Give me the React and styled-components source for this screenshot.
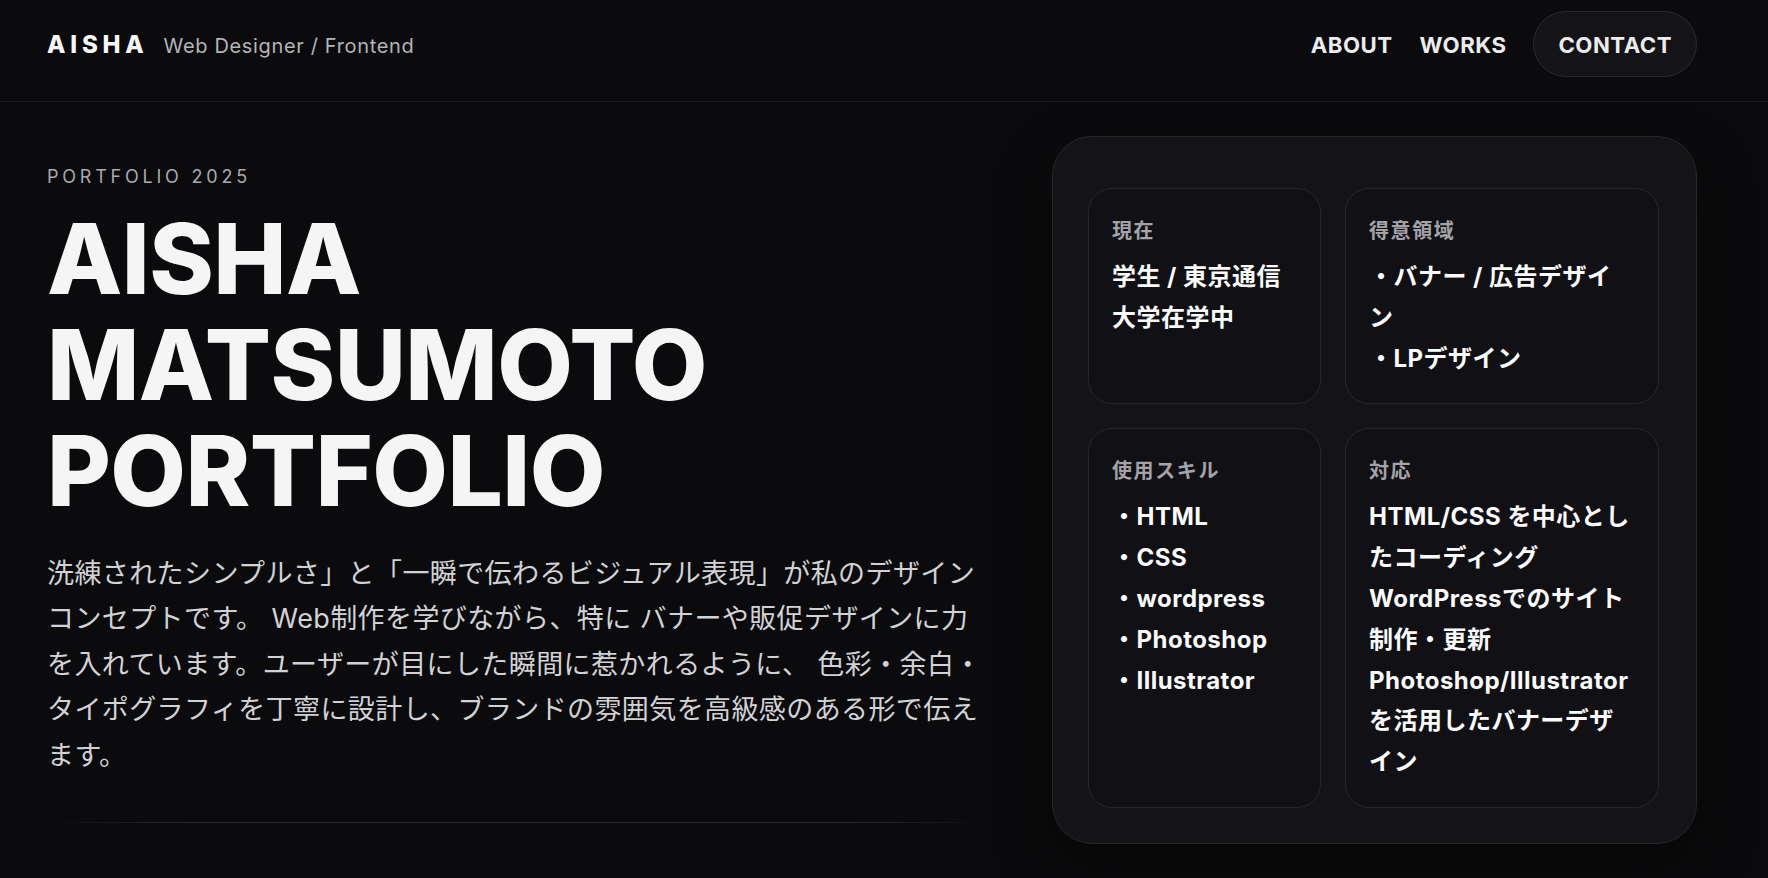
import React from "react";
import styled, { createGlobalStyle } from "styled-components";

const GlobalStyle = createGlobalStyle`
  * {
    box-sizing: border-box;
  }
  body {
    margin: 0;
    background: #0b0b0d;
    color: #f5f5f5;
    font-family: "Inter", "Noto Sans CJK JP", sans-serif;
    -webkit-font-smoothing: antialiased;
  }
`;

const profile = [
  { label: "現在", lines: ["学生 / 東京通信大学在学中"] },
  { label: "得意領域", lines: ["・バナー / 広告デザイン", "・LPデザイン"] },
  {
    label: "使用スキル",
    lines: ["・HTML", "・CSS", "・wordpress", "・Photoshop", "・Illustrator"],
  },
  {
    label: "対応",
    lines: [
      "HTML/CSS を中心としたコーディング",
      "WordPressでのサイト制作・更新",
      "Photoshop/Illustratorを活用したバナーデザイン",
    ],
  },
];

export default function App() {
  return (
    <Page>
      <GlobalStyle />
      <Header>
        <Brand>
          <Logo>AISHA</Logo>
          <Tagline>Web Designer / Frontend</Tagline>
        </Brand>
        <Nav>
          <NavLink href="#about">ABOUT</NavLink>
          <NavLink href="#works">WORKS</NavLink>
          <ContactLink href="#contact">CONTACT</ContactLink>
        </Nav>
      </Header>

      <Hero>
        <Intro>
          <Eyebrow>PORTFOLIO 2025</Eyebrow>
          <Title>
            <TitleLine>AISHA</TitleLine>
            <TitleLine>MATSUMOTO</TitleLine>
            <TitleLine>PORTFOLIO</TitleLine>
          </Title>
          <Lead>
            洗練されたシンプルさ」と「一瞬で伝わるビジュアル表現」が私のデザインコンセプトです。 Web制作を学びながら、特に バナーや販促デザインに力を入れています。ユーザーが目にした瞬間に惹かれるように、 色彩・余白・タイポグラフィを丁寧に設計し、ブランドの雰囲気を高級感のある形で伝えます。
          </Lead>
          <Rule />
        </Intro>

        <ProfileCard>
          <InfoGrid>
            {profile.map((item) => (
              <InfoCard key={item.label}>
                <Label>{item.label}</Label>
                {item.lines.map((line) => (
                  <Value key={line}>{line}</Value>
                ))}
              </InfoCard>
            ))}
          </InfoGrid>
        </ProfileCard>
      </Hero>
    </Page>
  );
}

const Page = styled.div`
  min-height: 100vh;
  background: #0b0b0d;
`;

const Header = styled.header`
  display: flex;
  align-items: center;
  justify-content: space-between;
  padding: 11px 71px 24px 47px;
  border-bottom: 1px solid #1b1b1f;
`;

const Brand = styled.div`
  display: flex;
  align-items: baseline;
  gap: 15px;
`;

const Logo = styled.span`
  font-size: 24px;
  font-weight: 800;
  letter-spacing: 0.2em;
  color: #f7f7f7;
`;

const Tagline = styled.span`
  font-size: 20px;
  font-weight: 400;
  letter-spacing: 0.65px;
  color: #b4b4b9;
`;

const Nav = styled.nav`
  display: flex;
  align-items: center;
  gap: 27px;
`;

const NavLink = styled.a`
  font-size: 22.2px;
  font-weight: 700;
  letter-spacing: 0.022em;
  color: #ececee;
  text-decoration: none;
`;

const ContactLink = styled(NavLink)`
  display: flex;
  align-items: center;
  height: 66px;
  padding: 0 24px;
  border-radius: 999px;
  border: 1px solid #2a2a2f;
  background: #141417;
`;

const Hero = styled.main`
  display: grid;
  grid-template-columns: 1fr 645px;
  column-gap: 62px;
  align-items: center;
  padding: 34px 71px 35px 47px;
`;

const Intro = styled.section`
  display: flex;
  flex-direction: column;
  padding-top: 6px;
`;

const Eyebrow = styled.p`
  margin: 0 0 16px;
  font-size: 18px;
  line-height: 27px;
  font-weight: 400;
  letter-spacing: 0.21em;
  color: #a9a9ae;
`;

const Title = styled.h1`
  margin: 0;
  font-size: 98px;
  line-height: 106px;
  font-weight: 800;
  letter-spacing: -0.006em;
  color: #f5f5f5;
`;

const TitleLine = styled.span`
  display: block;
  height: 106px;
`;

const Lead = styled.p`
  margin: 27px 0 0;
  max-width: 942px;
  font-size: 27px;
  line-height: 45.5px;
  font-weight: 400;
  letter-spacing: 0.4px;
  color: #d2d2d6;
`;

const Rule = styled.div`
  margin-top: 44px;
  height: 1px;
  background: linear-gradient(
    90deg,
    transparent,
    rgba(255, 255, 255, 0.13) 15%,
    rgba(255, 255, 255, 0.13) 85%,
    transparent
  );
`;

const ProfileCard = styled.aside`
  padding: 51px 37px 35px 35px;
  border-radius: 40px;
  border: 1px solid #26262b;
  background: #141417;
  box-shadow: 0 24px 60px rgba(0, 0, 0, 0.45);
`;

const InfoGrid = styled.div`
  display: grid;
  grid-template-columns: 233px 1fr;
  gap: 24px;
`;

const InfoCard = styled.div`
  padding: 26px 25px 24px 23px;
  border-radius: 24px;
  border: 1px solid #26262b;
  background: #111115;
`;

const Label = styled.div`
  margin-bottom: 10px;
  font-size: 20px;
  line-height: 32px;
  font-weight: 700;
  letter-spacing: 0.08em;
  color: #a3a3a8;
`;

const Value = styled.div`
  font-size: 24px;
  line-height: 40.8px;
  font-weight: 700;
  letter-spacing: 0.02em;
  color: #fafafa;
`;
